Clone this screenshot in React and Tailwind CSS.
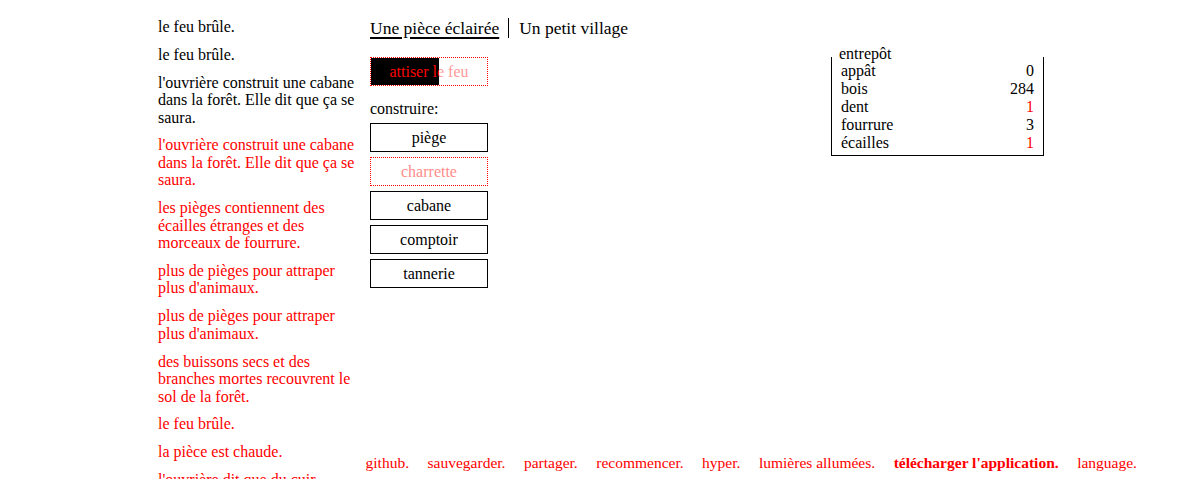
import React from "react";

const notifications = [
  { text: "le feu brûle.", red: false },
  { text: "le feu brûle.", red: false },
  { text: "l'ouvrière construit une cabane dans la forêt. Elle dit que ça se saura.", red: false },
  { text: "l'ouvrière construit une cabane dans la forêt. Elle dit que ça se saura.", red: true },
  { text: "les pièges contiennent des écailles étranges et des morceaux de fourrure.", red: true },
  { text: "plus de pièges pour attraper plus d'animaux.", red: true },
  { text: "plus de pièges pour attraper plus d'animaux.", red: true },
  { text: "des buissons secs et des branches mortes recouvrent le sol de la forêt.", red: true },
  { text: "le feu brûle.", red: true },
  { text: "la pièce est chaude.", red: true },
  { text: "l'ouvrière dit que du cuir pourrait être utile. elle dit que les villageois pourraient en faire.", red: true },
];

const stores = [
  { name: "appât", value: "0", red: false },
  { name: "bois", value: "284", red: false },
  { name: "dent", value: "1", red: true },
  { name: "fourrure", value: "3", red: false },
  { name: "écailles", value: "1", red: true },
];

const builds = [
  { label: "piège", disabled: false },
  { label: "charrette", disabled: true },
  { label: "cabane", disabled: false },
  { label: "comptoir", disabled: false },
  { label: "tannerie", disabled: false },
];

const footer = [
  { label: "github.", bold: false },
  { label: "sauvegarder.", bold: false },
  { label: "partager.", bold: false },
  { label: "recommencer.", bold: false },
  { label: "hyper.", bold: false },
  { label: "lumières allumées.", bold: false },
  { label: "télécharger l'application.", bold: true },
  { label: "language.", bold: false },
];

export default function App() {
  return (
    <div className="relative h-[479px] w-[1200px] overflow-hidden bg-white font-['Liberation_Serif',serif] text-[16px] text-black">
      <div className="flex pl-[158px] pt-[18px]">
        {/* notifications */}
        <div className="w-[200px] shrink-0">
          {notifications.map((n, i) => (
            <div
              key={i}
              className={`mb-[10.3px] leading-[17.5px] ${n.red ? "text-[#ff0000]" : "text-black"}`}
            >
              {n.text}
            </div>
          ))}
        </div>

        {/* main */}
        <div className="ml-[12px] w-[674px] shrink-0">
          <div className="flex text-[17.5px] leading-[20px]">
            <span className="pr-[9px] underline decoration-[1.5px] underline-offset-[3px]">
              Une pièce éclairée
            </span>
            <span className="border-l border-black pl-[10px]">Un petit village</span>
          </div>

          <div className="mt-[19px] flex items-start justify-between">
            <div className="w-[118px]">
              <div className="relative flex h-[29px] items-center justify-center border border-dotted border-[#ff0000] text-[#ff9a9a]">
                attiser le feu
                <div className="absolute left-0 top-0 h-[27px] w-[68px] overflow-hidden bg-black">
                  <div className="flex h-[27px] w-[116px] items-center justify-center text-[#ff0000]">
                    attiser le feu
                  </div>
                </div>
              </div>

              <div className="mt-[14px] mb-[5px] leading-[18px]">construire:</div>

              {builds.map((b) => (
                <div
                  key={b.label}
                  className={`mb-[5px] flex h-[29px] items-center justify-center border ${
                    b.disabled
                      ? "border-dotted border-[#ff0000] text-[#ff8c8c]"
                      : "border-black text-black"
                  }`}
                >
                  {b.label}
                </div>
              ))}
            </div>

            <div className="relative w-[213px] border-x border-b border-black pb-[3px] pl-[9px] pr-[9px] pt-[5px]">
              <div className="absolute left-[7px] top-[-12px] bg-white leading-[18px]">entrepôt</div>
              {stores.map((s) => (
                <div key={s.name} className="flex justify-between leading-[18px]">
                  <span>{s.name}</span>
                  <span className={s.red ? "text-[#ff0000]" : "text-black"}>{s.value}</span>
                </div>
              ))}
            </div>
          </div>
        </div>
      </div>

      <div className="absolute bottom-[7px] right-[63px] flex gap-[18.5px] text-[15.5px] leading-[18px] text-[#ff0000]">
        {footer.map((f) => (
          <span key={f.label} className={f.bold ? "font-bold" : ""}>
            {f.label}
          </span>
        ))}
      </div>
    </div>
  );
}
